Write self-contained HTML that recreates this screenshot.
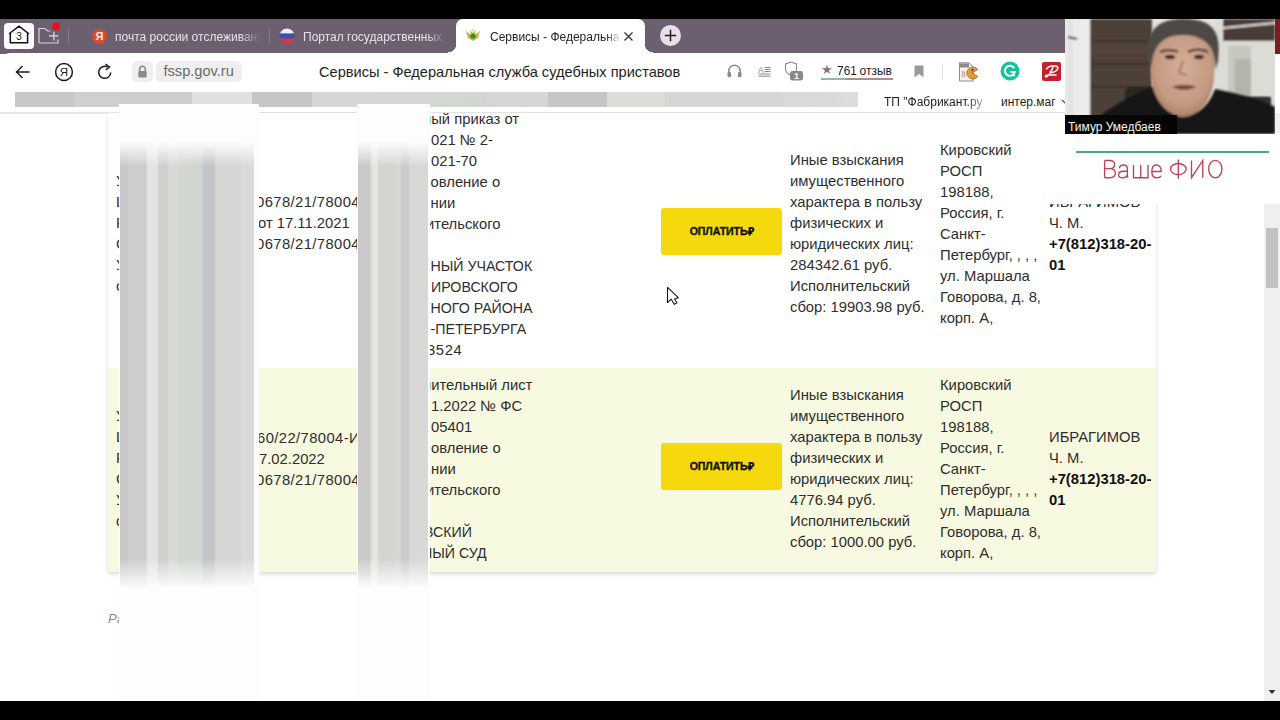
<!DOCTYPE html>
<html><head><meta charset="utf-8">
<style>
*{margin:0;padding:0;box-sizing:border-box}
html,body{width:1280px;height:720px;overflow:hidden;background:#fff;font-family:"Liberation Sans",sans-serif}
.a{position:absolute}
#topbar{left:0;top:0;width:1280px;height:19px;background:#000}
#tabs{left:0;top:19px;width:1280px;height:35px;background:#6b5f70}
#addr{left:0;top:53px;width:1280px;height:40px;background:#fff;border-radius:10px 10px 0 0}
#bottom{left:0;top:700.5px;width:1280px;height:20px;background:#000}
.tabtxt{font-size:12px;color:#e6e1e8;white-space:nowrap;overflow:hidden}
.t{font-size:14.8px;color:#2e2e2e;white-space:nowrap;line-height:21px}
.tb{font-weight:bold;color:#111}
.blur1{background:linear-gradient(to right,#c8c8c8 0,#c9c9c9 7px,#cdcdcb 9px,#cdcdcb 26px,#e3e4df 28px,#e3e4df 37px,#cfd0cc 39px,#cfd0cc 47px,#d8dad6 49px,#d8dad6 57px,#d1d6d0 60px,#d0d5cf 81px,#c5c5c7 84px,#c5c5c7 94px,#d6d6d4 96px,#d6d6d4 120px,#dadada 122px,#dadada 134px);
-webkit-mask-image:linear-gradient(to bottom,transparent 0,transparent 38px,#000 62px,#000 455px,transparent 484px)}
.blur2{background:linear-gradient(to right,#cacaca 0,#cacaca 12px,#e4e5e0 14px,#e4e5e0 19px,#d4d4d0 21px,#d4d4d0 36px,#d6d8d4 38px,#d6d8d4 42px,#cbcbcb 44px,#cbcbcb 50px,#d8d8d6 52px,#d8d8d6 70px);
-webkit-mask-image:linear-gradient(to bottom,transparent 0,transparent 38px,#000 62px,#000 455px,transparent 484px)}
</style></head><body>
<div id="topbar" class="a"></div>
<div id="tabs" class="a"></div>
<!-- tab bar bottom corners near active tab -->
<!-- home tab -->
<div class="a" style="left:4px;top:23px;width:30px;height:26px;background:#fff;border-radius:4px"></div>
<svg class="a" style="left:4px;top:23px" width="30" height="26" viewBox="0 0 30 26">
  <path d="M5.5 10.5 L15 3.2 L24.5 10.5 L23.6 10.5 L23.6 19.8 L6.3 19.8 L6.3 10.5 Z" fill="none" stroke="#111" stroke-width="1.5" stroke-linejoin="round"/>
  <text x="15" y="17" font-family="Liberation Sans" font-size="10" text-anchor="middle" fill="#111">3</text>
</svg>
<!-- folder + -->
<svg class="a" style="left:36px;top:22px" width="28" height="24" viewBox="0 0 28 24">
  <path d="M3 21 V6.5 H9.2 L11.6 9 H14.5" fill="none" stroke="#d9d1dc" stroke-width="1.2"/>
  <path d="M3 21 H22 V17.5" fill="none" stroke="#d9d1dc" stroke-width="1.2"/>
  <path d="M17.9 9.5 V18.5 M13 13.8 H22.5" fill="none" stroke="#e4dde6" stroke-width="1.2"/>
  <circle cx="20.2" cy="4.4" r="4" fill="#e8101a"/>
</svg>
<div class="a" style="left:68px;top:28px;width:1px;height:16px;background:#857a88"></div>
<!-- yandex tab -->
<div class="a" style="left:92px;top:28.5px;width:15px;height:15px;border-radius:50%;background:#dc4a2c"></div>
<div class="a" style="left:92px;top:29px;width:15px;height:15px;line-height:15px;text-align:center;font-size:11px;font-weight:bold;color:#fde8e0">Я</div>
<div class="a tabtxt" style="left:115px;top:29.5px;width:146px;-webkit-mask-image:linear-gradient(to right,#000 125px,transparent 146px)">почта россии отслеживание</div>
<div class="a" style="left:269px;top:28px;width:1px;height:16px;background:#857a88"></div>
<!-- gosuslugi tab -->
<svg class="a" style="left:279px;top:28px" width="16" height="16" viewBox="0 0 16 16">
  <defs><clipPath id="cc"><circle cx="8" cy="8" r="7.5"/></clipPath></defs>
  <g clip-path="url(#cc)"><rect x="0" y="0" width="16" height="5.6" fill="#f2f2f2"/><rect x="0" y="5.6" width="16" height="5" fill="#2f55b8"/><rect x="0" y="10.6" width="16" height="6" fill="#e2324a"/></g>
</svg>
<div class="a tabtxt" style="left:303px;top:29.5px;width:142px;-webkit-mask-image:linear-gradient(to right,#000 125px,transparent 142px)">Портал государственных услуг</div>
<!-- active tab -->
<div class="a" style="left:456px;top:19px;width:189px;height:40px;background:#fff;border-radius:7px 7px 0 0"></div>
<div class="a" style="left:448px;top:44px;width:8px;height:9px;background:radial-gradient(circle at 0 0,#6b5f70 8px,#fff 8.5px)"></div>
<div class="a" style="left:645px;top:44px;width:8px;height:9px;background:radial-gradient(circle at 100% 0,#6b5f70 8px,#fff 8.5px)"></div>
<svg class="a" style="left:465px;top:28px" width="16" height="16" viewBox="0 0 16 16">
  <path d="M1 3 L6 7 L5 2 L8 5 L11 2 L10 7 L15 3 L13 10 L8 13 L3 10 Z" fill="#c9b43a"/>
  <circle cx="8" cy="8" r="2.6" fill="#2e8a4a"/>
  <path d="M8 1 L9 3 L7 3 Z" fill="#c9b43a"/>
</svg>
<div class="a tabtxt" style="left:490px;top:29.5px;width:131px;color:#1e1e1e;-webkit-mask-image:linear-gradient(to right,#000 116px,transparent 131px)">Сервисы - Федеральная служба</div>
<svg class="a" style="left:623px;top:31px" width="11" height="11" viewBox="0 0 11 11"><path d="M1.5 1.5 L9.5 9.5 M9.5 1.5 L1.5 9.5" stroke="#333" stroke-width="1.3"/></svg>
<!-- new tab + -->
<div class="a" style="left:659.5px;top:25px;width:21px;height:21px;border-radius:50%;background:#e7e0e8"></div>
<svg class="a" style="left:659.5px;top:25px" width="21" height="21" viewBox="0 0 21 21"><path d="M10.5 4.8 V16.2 M4.8 10.5 H16.2" stroke="#1c1c1c" stroke-width="1.5"/></svg>

<div id="addr" class="a"></div>
<div class="a" style="left:1274px;top:19px;width:6px;height:35px;background:#7a1d25"></div>
<!-- address row icons -->
<svg class="a" style="left:14px;top:64px" width="18" height="16" viewBox="0 0 18 16"><path d="M15.5 8 H2.5 M8.5 2 L2.5 8 L8.5 14" fill="none" stroke="#1a1a1a" stroke-width="1.5"/></svg>
<svg class="a" style="left:54px;top:62px" width="20" height="20" viewBox="0 0 20 20"><circle cx="10" cy="10" r="8.4" fill="none" stroke="#1a1a1a" stroke-width="1.5"/>
<text x="10" y="14.3" font-family="Liberation Sans" font-size="11.5" text-anchor="middle" fill="#1a1a1a">Я</text></svg>
<svg class="a" style="left:95px;top:62px" width="20" height="20" viewBox="0 0 20 20"><path d="M15.7 10.5 A6 6 0 1 1 12.5 5" fill="none" stroke="#1a1a1a" stroke-width="1.5"/><path d="M10.5 2 L14.5 5.1 L10.8 8" fill="none" stroke="#1a1a1a" stroke-width="1.5"/></svg>
<div class="a" style="left:132px;top:61px;width:21px;height:21px;background:#efefef;border-radius:5px"></div>
<svg class="a" style="left:132px;top:61px" width="21" height="21" viewBox="0 0 21 21"><path d="M7.7 10 V8 A2.8 2.8 0 0 1 13.3 8 V10" fill="none" stroke="#8a8a8a" stroke-width="1.6"/><rect x="6.3" y="10" width="8.4" height="6.5" rx="1" fill="#8a8a8a"/></svg>
<div class="a" style="left:156px;top:61px;width:86px;height:21px;background:#efefef;border-radius:5px"></div>
<div class="a" style="left:163.5px;top:63px;font-size:14.6px;color:#6a6a6a;white-space:nowrap">fssp.gov.ru</div>
<div class="a" style="left:319px;top:64px;font-size:14.6px;color:#1e1e1e;white-space:nowrap">Сервисы - Федеральная служба судебных приставов</div>
<!-- headphones -->
<svg class="a" style="left:726px;top:63px" width="17" height="16" viewBox="0 0 17 16"><path d="M2.8 11 V8 A5.7 5.7 0 0 1 14.2 8 V11" fill="none" stroke="#8a8a8a" stroke-width="1.6"/><rect x="1.5" y="9" width="3.5" height="5.3" rx="1.2" fill="#8a8a8a"/><rect x="12" y="9" width="3.5" height="5.3" rx="1.2" fill="#8a8a8a"/></svg>
<!-- reader -->
<svg class="a" style="left:757px;top:64px" width="15" height="15" viewBox="0 0 15 15"><text x="1" y="8.5" font-family="Liberation Sans" font-size="8.5" fill="#8a8a8a">A</text><path d="M7.5 3.5 H13.5 M7.5 5.5 H13.5 M7.5 7.5 H13.5 M1.5 10 H13.5 M1.5 12.2 H13.5" stroke="#8a8a8a" stroke-width="1"/></svg>
<!-- shield with badge -->
<svg class="a" style="left:783px;top:60px" width="22" height="22" viewBox="0 0 22 22"><path d="M8 2 L13.5 4 V9 C13.5 12 11 14 8 15.5 C5 14 2.5 12 2.5 9 V4 Z" fill="none" stroke="#8c8c8c" stroke-width="1.1"/><rect x="7" y="11" width="13" height="9.5" rx="2.2" fill="#8a8a8a"/><text x="13.5" y="19" font-family="Liberation Sans" font-size="9" font-weight="bold" text-anchor="middle" fill="#fff">1</text></svg>
<!-- rating -->
<div class="a" style="left:821px;top:62px;font-size:13px;color:#7a7a7a">★</div>
<div class="a" style="left:836.5px;top:63px;font-size:13px;color:#1e1e1e;transform:scaleX(.92);transform-origin:0 0">761</div>
<div class="a" style="left:859.5px;top:64px;font-size:12px;color:#1e1e1e">отзыв</div>
<div class="a" style="left:821px;top:78px;width:25px;height:1.6px;background:#8fbaa2"></div>
<div class="a" style="left:846px;top:78px;width:47px;height:1.6px;background:#b58a80"></div>
<!-- bookmark -->
<svg class="a" style="left:913px;top:65px" width="12" height="13" viewBox="0 0 12 13"><path d="M1.5 0.5 H10.5 V12.5 L6 9 L1.5 12.5 Z" fill="#9a9a9a"/></svg>
<div class="a" style="left:942px;top:64px;width:1px;height:15px;background:#e0e0e0"></div>
<!-- ext 1 -->
<svg class="a" style="left:958px;top:62px" width="22" height="20" viewBox="0 0 22 20"><path d="M1.5 0.8 H11 L15 4.5 V19 H1.5 Z" fill="#f2f2f2" stroke="#8a8a8a" stroke-width="1"/><rect x="2" y="1.5" width="9" height="4" fill="#8a8a8a"/><path d="M4 9 Q6 12 4 15 M6 9 Q8 12 6 15" stroke="#e08070" stroke-width="0.9" fill="none"/><path d="M14 11 L19.8 7.5 A6 6 0 1 0 19.8 14.5 Z" fill="#ee9a2a" stroke="#6a4a20" stroke-width="0.6"/><circle cx="14.5" cy="8" r="0.9" fill="#222"/></svg>
<!-- grammarly -->
<svg class="a" style="left:1000px;top:61px" width="20" height="20" viewBox="0 0 20 20"><circle cx="10" cy="10" r="9.5" fill="#15c39a"/><path d="M14.2 7.2 A5 5 0 1 0 14.8 11 H10.5" fill="none" stroke="#fff" stroke-width="2"/><path d="M12.3 13.3 L14.6 15.2" stroke="#fff" stroke-width="1.6"/></svg>
<!-- red ext -->
<div class="a" style="left:1042px;top:62px;width:19px;height:19px;background:#c41f2b;border-radius:2px"></div>
<svg class="a" style="left:1042px;top:62px" width="19" height="19" viewBox="0 0 19 19"><path d="M4.5 7 C6 4 12 3 15 4.5 C17 6 15 10 10 10.5 C8.5 10.6 8 10 8.5 9.5" fill="none" stroke="#fff" stroke-width="1.5" stroke-linecap="round"/><path d="M11 5 C9.5 9 7.5 13 5 14.5 C3.5 15.3 2.8 14 4 13.3 C6 12.3 10 13.5 14 13" fill="none" stroke="#fff" stroke-width="1.5" stroke-linecap="round"/></svg>

<!-- bookmarks blurred -->
<div class="a" style="left:15px;top:92px;width:843px;height:14.8px;background:linear-gradient(to right,#c8c8c8 0,#c8c8c8 60px,#cfcfcf 60px,#cfcfcf 105px,#cdcecb 105px,#cdcecb 177px,#e0e1dd 177px,#e0e1dd 237px,#c6c7c4 237px,#c6c7c4 297px,#d6d6d4 297px,#d6d6d4 352px,#d4d8d2 352px,#d2d6d0 472px,#d6d6d6 472px,#d6d6d6 533px,#c6c6c6 533px,#c6c6c6 592px,#dcdcd8 592px,#dcdcd8 650px,#d6d6d4 650px,#d6d6d4 765px,#d8d8d8 765px,#dadada 820px,#dedede 843px)"></div>
<div class="a" style="left:884px;top:94.5px;font-size:12px;color:#1e1e1e;white-space:nowrap;-webkit-mask-image:linear-gradient(to right,#000 82px,rgba(0,0,0,.35) 99px)">ТП "Фабрикант.ру</div>
<div class="a" style="left:1001px;top:94.5px;font-size:12px;color:#1e1e1e;white-space:nowrap">интер.маг</div>
<svg class="a" style="left:1061px;top:99px" width="8" height="6" viewBox="0 0 8 6"><path d="M1 1 L4 4 L7 1" fill="none" stroke="#444" stroke-width="1.1"/></svg>

<!-- page -->
<div class="a" style="left:0;top:112px;width:1264px;height:1.6px;background:#e6e6e6"></div>
<div class="a" style="left:108px;top:113px;width:1048px;height:459px;background:#fff;box-shadow:0 2px 4px rgba(0,0,0,.15)"></div>
<div class="a" style="left:108px;top:368px;width:1048px;height:204px;background:#f8f9e1"></div>

<!-- buttons -->
<div class="a" style="left:661px;top:208px;width:121px;height:47px;background:#f6d90c;border-radius:3px"></div>
<div class="a" style="left:661px;top:443px;width:121px;height:47px;background:#f6d90c;border-radius:3px"></div>


<!-- TABLE TEXT -->
<div class="a t" style="left:116px;top:171px;width:4px;overflow:hidden">У<br>Ш<br>Р<br>С<br>У<br>с</div>
<div class="a t" style="left:256px;top:192px;letter-spacing:.4px">0678/21/78004</div>
<div class="a t" style="left:258px;top:213px">от 17.11.2021</div>
<div class="a t" style="left:256px;top:234px;letter-spacing:.4px">0678/21/78004</div>
<div class="a t" style="left:423px;top:109px">ный приказ от</div>
<div class="a t" style="left:431px;top:130px">021 № 2-</div>
<div class="a t" style="left:431px;top:151px">021-70</div>
<div class="a t" style="left:430.5px;top:172px">овление о</div>
<div class="a t" style="left:430.5px;top:193px">нии</div>
<div class="a t" style="left:426px;top:214px">ительского</div>
<div class="a t" style="left:430.5px;top:256px;font-size:14.2px">НЫЙ УЧАСТОК</div>
<div class="a t" style="left:431px;top:277px;font-size:14.2px">ИРОВСКОГО</div>
<div class="a t" style="left:430.5px;top:298px;font-size:14.2px">НОГО РАЙОНА</div>
<div class="a t" style="left:430.5px;top:319px;font-size:14.2px">-ПЕТЕРБУРГА</div>
<div class="a t" style="left:427px;top:340px;letter-spacing:.6px">3524</div>
<div class="a t" style="left:790px;top:150px">Иные взыскания<br>имущественного<br>характера в пользу<br>физических и<br>юридических лиц:<br>284342.61 руб.<br>Исполнительский<br>сбор: 19903.98 руб.</div>
<div class="a t" style="left:940px;top:140px">Кировский<br>РОСП<br>198188,<br>Россия, г.<br>Санкт-<br>Петербург, , , ,<br>ул. Маршала<br>Говорова, д. 8,<br>корп. А,</div>
<div class="a t" style="left:1049px;top:192px">ИБРАГИМОВ<br>Ч. М.<br><b class="tb">+7(812)318-20-<br>01</b></div>

<div class="a t" style="left:116px;top:406px;width:4px;overflow:hidden">У<br>Ш<br>Р<br>С<br>У<br>с</div>
<div class="a t" style="left:257px;top:428px;letter-spacing:.4px">60/22/78004-ИП</div>
<div class="a t" style="left:259px;top:449px">7.02.2022</div>
<div class="a t" style="left:256px;top:470px;letter-spacing:.4px">0678/21/78004</div>
<div class="a t" style="left:423px;top:375px">нительный лист</div>
<div class="a t" style="left:431px;top:396px">1.2022 № ФС</div>
<div class="a t" style="left:431px;top:417px">05401</div>
<div class="a t" style="left:431px;top:438px">овление о</div>
<div class="a t" style="left:431px;top:459px">нии</div>
<div class="a t" style="left:426px;top:480px">ительского</div>
<div class="a t" style="left:424px;top:522px;font-size:14.2px">ВСКИЙ</div>
<div class="a t" style="left:422px;top:543px;font-size:14.2px">НЫЙ СУД</div>
<div class="a t" style="left:790px;top:385px">Иные взыскания<br>имущественного<br>характера в пользу<br>физических и<br>юридических лиц:<br>4776.94 руб.<br>Исполнительский<br>сбор: 1000.00 руб.</div>
<div class="a t" style="left:940px;top:375px">Кировский<br>РОСП<br>198188,<br>Россия, г.<br>Санкт-<br>Петербург, , , ,<br>ул. Маршала<br>Говорова, д. 8,<br>корп. А,</div>
<div class="a t" style="left:1049px;top:427px">ИБРАГИМОВ<br>Ч. М.<br><b class="tb">+7(812)318-20-<br>01</b></div>
<div class="a" style="left:661px;top:208px;width:121px;height:47px;line-height:47px;text-align:center;font-size:10.6px;font-weight:bold;color:#111;letter-spacing:-.1px;-webkit-text-stroke:.35px #111;padding-left:1px">ОПЛАТИТЬ<span style="margin-left:1px">₽</span></div>
<div class="a" style="left:661px;top:443px;width:121px;height:47px;line-height:47px;text-align:center;font-size:10.6px;font-weight:bold;color:#111;letter-spacing:-.1px;-webkit-text-stroke:.35px #111;padding-left:1px">ОПЛАТИТЬ<span style="margin-left:1px">₽</span></div>
<div class="a" style="left:108px;top:611px;font-size:13px;font-style:italic;color:#888">Ра</div>

<svg class="a" style="left:666px;top:286px" width="14" height="20" viewBox="0 0 14 20"><path d="M1.5 1.3 L1.5 16.5 L5.25 13.2 L8.4 18.4 L10.9 16.7 L8.6 13 L12.3 11.7 Z" fill="#fff" stroke="#111" stroke-width="1.05" stroke-linejoin="round"/></svg>
<!-- blurs -->
<div class="a" style="left:119px;top:104px;width:140px;height:597px;background:#fdfdfd"></div>
<div class="a blur1" style="left:120px;top:104px;width:134px;height:490px"></div>
<div class="a" style="left:357px;top:104px;width:73px;height:597px;background:#fdfdfd"></div>
<div class="a blur2" style="left:358px;top:104px;width:70px;height:490px"></div>

<!-- scrollbar -->
<div class="a" style="left:1264px;top:113px;width:16px;height:588px;background:#f0f0f0"></div>
<div class="a" style="left:1266px;top:228px;width:12px;height:60px;background:#c2c2c2"></div>
<svg class="a" style="left:1268px;top:689px" width="8" height="6" viewBox="0 0 8 6"><path d="M0.5 1 H7.5 L4 5 Z" fill="#333"/></svg>
<!-- webcam -->
<div class="a" style="left:1040px;top:133px;width:240px;height:71px;background:#fff"></div>
<svg class="a" style="left:1065px;top:19px" width="210" height="115" viewBox="0 0 210 115">
<defs>
<filter id="bl" x="-10%" y="-10%" width="120%" height="120%"><feGaussianBlur stdDeviation="1.2"/></filter>
<filter id="bl2"><feGaussianBlur stdDeviation="2.5"/></filter>
<radialGradient id="face" cx="50%" cy="45%" r="60%"><stop offset="0" stop-color="#d6ae98"/><stop offset="0.7" stop-color="#c49a82"/><stop offset="1" stop-color="#a57a66"/></radialGradient>
</defs>
<rect width="210" height="115" fill="#e4e2e0"/>
<g filter="url(#bl)">
<rect x="0" y="0" width="26" height="115" fill="#ebebea"/>
<rect x="2" y="0" width="6" height="115" fill="#d8d8d8" opacity=".4"/>
<path d="M3 18 L12 20" stroke="#333" stroke-width="2"/>
<rect x="25" y="0" width="62" height="100" fill="#4e3f37"/>
<path d="M25 22 H87 M25 45 H87 M25 68 H87" stroke="#3a2e28" stroke-width="1.5"/>
<rect x="25" y="26" width="62" height="10" fill="#56463d" opacity=".6"/>
<rect x="150" y="0" width="60" height="115" fill="#dcdcd6"/>
<rect x="158" y="0" width="52" height="22" fill="#4a3a34"/>
<path d="M158 9 L210 4" stroke="#e4e4e0" stroke-width="2"/>
<rect x="163" y="27" width="35" height="70" fill="#c6c8c0"/>
<rect x="170" y="40" width="20" height="40" fill="#a9a89c" opacity=".6"/>
<rect x="186" y="22" width="24" height="60" fill="#dcdcd6"/>
<rect x="62" y="68" width="30" height="25" fill="#2f2a28"/>
<rect x="180" y="78" width="24" height="30" fill="#3a3a3a"/>
</g>
<g filter="url(#bl)">
<rect x="60" y="70" width="32" height="28" fill="#2a2624"/>
<rect x="176" y="78" width="30" height="30" fill="#303030"/>
<path d="M104 86 L132 86 L134 102 L102 102 Z" fill="#a88068"/>
<path d="M85 34 C85 14 98 9 118 9 C140 9 151 15 151 34 L149 58 C148 78 138 96 118 97 C98 96 88 78 86 58 Z" fill="url(#face)"/>
<path d="M83 42 C79 10 94 0 118 0 C146 0 157 10 153 42 L151 50 C150 28 142 17 118 16 C96 16 88 28 86 50 Z" fill="#4e4a47"/>
<path d="M95 33 C101 30 109 31 113 33 M123 33 C129 30 137 30 143 33" stroke="#4a3428" stroke-width="2.4" fill="none"/>
<ellipse cx="105" cy="38" rx="5" ry="2.2" fill="#3a2820"/>
<ellipse cx="134" cy="38" rx="5" ry="2.2" fill="#3a2820"/>
<path d="M118 42 L114 54 L122 56" stroke="#9a6a5a" stroke-width="1.6" fill="none"/>
<path d="M107 68 C114 65 124 65 131 68 C124 72 114 72 107 68 Z" fill="#7a4440"/>
<path d="M18 115 C30 97 58 80 87 68 C93 86 105 97 118 98 C132 97 144 86 150 70 C176 75 200 82 210 88 L210 115 Z" fill="#121212"/>
</g>
<rect x="0" y="96" width="112" height="19" fill="#050505"/>
<text x="3" y="112" font-family="Liberation Sans" font-size="12" fill="#f4f4f4">Тимур Умедбаев</text>
</svg>
<div class="a" style="left:1076px;top:150.5px;width:193px;height:2.5px;background:#4fa583"></div>
<svg class="a" style="left:1100px;top:155px" width="130" height="28" viewBox="0 0 130 28">
<g fill="none" stroke="#b84556" stroke-width="1.35" stroke-linecap="butt" stroke-linejoin="miter">
<path d="M4.6 5.5 V22.7 M4.6 5.5 H9.8 C13.2 5.5 14.6 7.3 14.6 9.5 C14.6 12 12.6 13.6 9.8 13.6 H4.6 M9.8 13.6 C13.3 13.6 15.3 15.5 15.3 18.1 C15.3 21 13.2 22.7 10 22.7 H4.6"/>
<path d="M19.3 13.2 C19.5 11.2 21.4 10 23.6 10 C26 10 27.4 11.4 27.4 13.8 V20.8 C27.4 21.6 27.6 22.3 28 22.7 M27.4 16.2 H23.2 C20.2 16.2 18.6 17.5 18.6 19.5 C18.6 21.5 20.2 22.9 22.5 22.9 C24.8 22.9 26.7 21.6 27.4 20"/>
<path d="M33.5 10 V22.7 H48 V10 M40.75 10 V22.7"/>
<path d="M52.1 16.5 H61.2 C61.2 12.6 59.5 10 56.6 10 C53.6 10 51.8 12.8 51.8 16.5 C51.8 20.3 53.8 22.9 57 22.9 C59 22.9 60.4 22 61.2 20.8"/>
<path d="M78.3 4.5 V23.8"/>
<ellipse cx="78.3" cy="14.1" rx="7.8" ry="5.6"/>
<path d="M91.5 5.5 V22.7 L102.8 5.5 V22.7"/>
<ellipse cx="115.3" cy="14.1" rx="6.6" ry="8.7"/>
</g></svg>

<div id="bottom" class="a"></div>
</body></html>
